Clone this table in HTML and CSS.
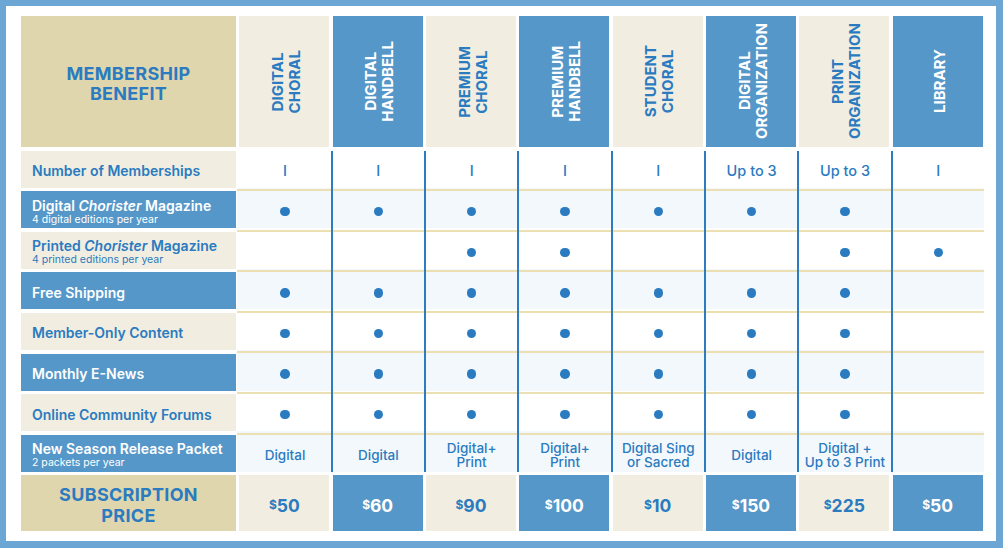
FILE: index.html
```html
<!DOCTYPE html>
<html lang="en">
<head>
<meta charset="utf-8">
<title>Membership Benefits</title>
<link rel="stylesheet" href="styles.css">
</head>
<body>
<div class="frame">
  <div class="table">
    <div class="corner">MEMBERSHIP<br>BENEFIT</div>
    <div class="head beige"><span>DIGITAL<br>CHORAL</span></div>
    <div class="head blue"><span>DIGITAL<br>HANDBELL</span></div>
    <div class="head beige"><span>PREMIUM<br>CHORAL</span></div>
    <div class="head blue"><span>PREMIUM<br>HANDBELL</span></div>
    <div class="head beige"><span>STUDENT<br>CHORAL</span></div>
    <div class="head blue"><span>DIGITAL<br>ORGANIZATION</span></div>
    <div class="head beige"><span>PRINT<br>ORGANIZATION</span></div>
    <div class="head blue"><span>LIBRARY</span></div>

    <div class="row first">
      <div class="label beige"><span>Number of Memberships</span></div>
      <div class="cell">I</div><div class="cell">I</div><div class="cell">I</div><div class="cell">I</div>
      <div class="cell">I</div><div class="cell">Up to 3</div><div class="cell">Up to 3</div><div class="cell">I</div>
    </div>

    <div class="row lite">
      <div class="label blue"><span>Digital <em>Chorister</em> Magazine</span><small>4 digital editions per year</small></div>
      <div class="cell"><i class="dot"></i></div><div class="cell"><i class="dot"></i></div><div class="cell"><i class="dot"></i></div><div class="cell"><i class="dot"></i></div>
      <div class="cell"><i class="dot"></i></div><div class="cell"><i class="dot"></i></div><div class="cell"><i class="dot"></i></div><div class="cell"></div>
    </div>

    <div class="row">
      <div class="label beige"><span>Printed <em>Chorister</em> Magazine</span><small>4 printed editions per year</small></div>
      <div class="cell"></div><div class="cell"></div><div class="cell"><i class="dot"></i></div><div class="cell"><i class="dot"></i></div>
      <div class="cell"></div><div class="cell"></div><div class="cell"><i class="dot"></i></div><div class="cell"><i class="dot"></i></div>
    </div>

    <div class="row lite">
      <div class="label blue"><span>Free Shipping</span></div>
      <div class="cell"><i class="dot"></i></div><div class="cell"><i class="dot"></i></div><div class="cell"><i class="dot"></i></div><div class="cell"><i class="dot"></i></div>
      <div class="cell"><i class="dot"></i></div><div class="cell"><i class="dot"></i></div><div class="cell"><i class="dot"></i></div><div class="cell"></div>
    </div>

    <div class="row">
      <div class="label beige"><span>Member-Only Content</span></div>
      <div class="cell"><i class="dot"></i></div><div class="cell"><i class="dot"></i></div><div class="cell"><i class="dot"></i></div><div class="cell"><i class="dot"></i></div>
      <div class="cell"><i class="dot"></i></div><div class="cell"><i class="dot"></i></div><div class="cell"><i class="dot"></i></div><div class="cell"></div>
    </div>

    <div class="row lite">
      <div class="label blue"><span>Monthly E-News</span></div>
      <div class="cell"><i class="dot"></i></div><div class="cell"><i class="dot"></i></div><div class="cell"><i class="dot"></i></div><div class="cell"><i class="dot"></i></div>
      <div class="cell"><i class="dot"></i></div><div class="cell"><i class="dot"></i></div><div class="cell"><i class="dot"></i></div><div class="cell"></div>
    </div>

    <div class="row">
      <div class="label beige"><span>Online Community Forums</span></div>
      <div class="cell"><i class="dot"></i></div><div class="cell"><i class="dot"></i></div><div class="cell"><i class="dot"></i></div><div class="cell"><i class="dot"></i></div>
      <div class="cell"><i class="dot"></i></div><div class="cell"><i class="dot"></i></div><div class="cell"><i class="dot"></i></div><div class="cell"></div>
    </div>

    <div class="row lite">
      <div class="label blue"><span>New Season Release Packet</span><small>2 packets per year</small></div>
      <div class="cell small-text">Digital</div>
      <div class="cell small-text">Digital</div>
      <div class="cell small-text">Digital+<br>Print</div>
      <div class="cell small-text">Digital+<br>Print</div>
      <div class="cell small-text">Digital Sing<br>or Sacred</div>
      <div class="cell small-text">Digital</div>
      <div class="cell small-text">Digital +<br>Up to 3 Print</div>
      <div class="cell"></div>
    </div>

    <div class="corner price-label">SUBSCRIPTION<br>PRICE</div>
    <div class="price beige"><span class="cur">$</span>50</div>
    <div class="price blue"><span class="cur">$</span>60</div>
    <div class="price beige"><span class="cur">$</span>90</div>
    <div class="price blue"><span class="cur">$</span>100</div>
    <div class="price beige"><span class="cur">$</span>10</div>
    <div class="price blue"><span class="cur">$</span>150</div>
    <div class="price beige"><span class="cur">$</span>225</div>
    <div class="price blue"><span class="cur">$</span>50</div>
  </div>
</div>
</body>
</html>
```

FILE: styles.css
```css
* { box-sizing: border-box; margin: 0; padding: 0; }

html, body {
  width: 1003px;
  height: 548px;
  overflow: hidden;
  background: #ffffff;
}

body {
  font-family: Inter, "Liberation Sans", sans-serif;
  color: #2a7bc0;
}

.frame {
  width: 1003px;
  height: 548px;
  border-style: solid;
  border-color: #6ba6d5;
  border-width: 6px 7px 7px 6px;
  padding: 10px 0 0 15px;
  background: #ffffff;
}

.table {
  display: grid;
  grid-template-columns: 215px repeat(8, 90px);
  grid-template-rows: 131px repeat(8, 37px) 56px;
  column-gap: 3.333px;
  row-gap: 3.6px;
}

.row { display: contents; }

.beige { background: #f1ede0; color: #2a7bc0; }
.blue { background: #5597c9; color: #ffffff; }

.corner {
  background: #e0d6ae;
  color: #2a7bc0;
  display: flex;
  align-items: center;
  justify-content: center;
  text-align: center;
  padding-top: 5px;
  font-weight: 700;
  font-size: 18px;
  letter-spacing: 0.3px;
  line-height: 20.5px;
}

.head {
  display: flex;
  align-items: center;
  justify-content: center;
  padding-left: 4px;
  font-weight: 700;
  font-size: 15px;
  line-height: 17.3px;
}

.head span {
  writing-mode: vertical-rl;
  transform: rotate(180deg);
  text-align: center;
}

.label {
  display: flex;
  flex-direction: column;
  justify-content: center;
  padding: 4px 0 0 11px;
  font-weight: 600;
  font-size: 14px;
  line-height: 14px;
  white-space: nowrap;
}

.label em { font-style: italic; }

.label small {
  font-size: 10.5px;
  font-weight: 400;
  line-height: 11px;
  margin-top: 1px;
}

.cell {
  margin: 0 -1.333px 0 -2px;
  padding-top: 4px;
  display: flex;
  align-items: center;
  justify-content: center;
  text-align: center;
  font-weight: 500;
  font-size: 14.5px;
  line-height: 14px;
  color: #2a7bc0;
  border-left: 2px solid #2e7cc0;
  background: #ffffff;
}

.row .cell:nth-child(2) { border-left-color: transparent; }

.row:not(.first) .cell {
  margin-top: -3.6px;
  padding-top: 7.6px;
  background: linear-gradient(#ece0b3, #ece0b3) 0 1.4px / 100% 2px no-repeat border-box, #ffffff;
}

.row.lite .cell {
  background: linear-gradient(#ece0b3, #ece0b3) 0 1.4px / 100% 2px no-repeat border-box, #f3f8fc;
}

.small-text { font-size: 13.5px; }

.dot {
  display: block;
  width: 9.5px;
  height: 9.5px;
  border-radius: 50%;
  background: #2a7bc0;
}

.price {
  display: flex;
  align-items: center;
  justify-content: center;
  padding-top: 4px;
  font-weight: 700;
  font-size: 17.5px;
}

.cur {
  font-size: 12px;
  margin-bottom: 2px;
}
```
